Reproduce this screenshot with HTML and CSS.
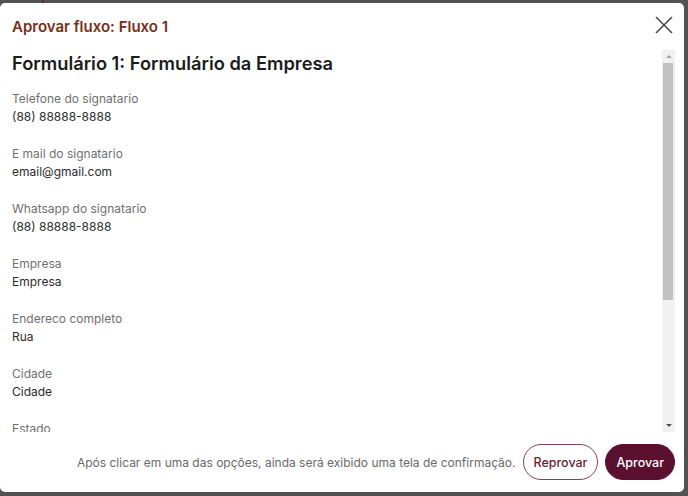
FILE: index.html
```html
<!DOCTYPE html>
<html lang="pt-BR">
<head>
<meta charset="utf-8">
<title>Aprovar fluxo</title>
<link rel="stylesheet" href="styles.css">
</head>
<body>
<div class="backdrop-mark"></div>
<div class="dialog">
  <div class="dialog-header">
    <h1 class="dialog-title">Aprovar fluxo: Fluxo 1</h1>
    <button class="close-btn" aria-label="Fechar">
      <svg width="20" height="20" viewBox="0 0 20 20"><path d="M2 2 L18 18 M18 2 L2 18" stroke="#4a4a4a" stroke-width="1.6" fill="none"/></svg>
    </button>
  </div>
  <div class="dialog-body">
    <div class="scroll-content">
      <h2 class="form-title">Formulário 1: Formulário da Empresa</h2>
      <div class="field"><div class="label">Telefone do signatario</div><div class="value">(88) 88888-8888</div></div>
      <div class="field"><div class="label">E mail do signatario</div><div class="value">email@gmail.com</div></div>
      <div class="field"><div class="label">Whatsapp do signatario</div><div class="value">(88) 88888-8888</div></div>
      <div class="field"><div class="label">Empresa</div><div class="value">Empresa</div></div>
      <div class="field"><div class="label">Endereco completo</div><div class="value">Rua</div></div>
      <div class="field"><div class="label">Cidade</div><div class="value">Cidade</div></div>
      <div class="field"><div class="label">Estado</div><div class="value">Estado</div></div>
      <div class="field"><div class="label">CEP</div><div class="value">00000-000</div></div>
    </div>
    <div class="scrollbar" aria-hidden="true">
      <div class="sb-btn"><span class="arrow-up"></span></div>
      <div class="sb-track"><div class="sb-thumb"></div></div>
      <div class="sb-btn"><span class="arrow-down"></span></div>
    </div>
  </div>
  <div class="dialog-footer">
    <span class="hint">Após clicar em uma das opções, ainda será exibido uma tela de confirmação.</span>
    <button class="btn btn-outline">Reprovar</button>
    <button class="btn btn-primary">Aprovar</button>
  </div>
</div>
</body>
</html>
```
FILE: styles.css
```css
* { box-sizing: border-box; }
html, body { margin: 0; padding: 0; }
body {
  width: 688px;
  height: 496px;
  background: #525252;
  font-family: "Inter", "DejaVu Sans", sans-serif;
  overflow: hidden;
  padding-top: 3px;
  position: relative;
}
.backdrop-mark {
  position: absolute;
  left: 42px;
  top: 0;
  width: 2px;
  height: 3px;
  background: #5a2a2a;
}
.dialog {
  width: 684px;
  height: 489px;
  background: #fff;
  border-radius: 5px;
  display: flex;
  flex-direction: column;
}
.dialog-header {
  display: flex;
  justify-content: space-between;
  align-items: flex-start;
  padding: 14px 10px 11px 12px;
  height: 45px;
}
.dialog-title {
  margin: 0;
  font-size: 15px;
  line-height: 20px;
  font-weight: 600;
  color: #7a2d14;
}
.close-btn {
  border: 0;
  background: none;
  padding: 0;
  margin-top: -2px;
  width: 20px;
  height: 20px;
  cursor: pointer;
}
.close-btn svg { display: block; }
.dialog-body {
  height: 384px;
  display: flex;
  margin-right: 9px;
}
.scroll-content {
  flex: 1;
  overflow: hidden;
  padding-left: 12px;
}
.scrollbar {
  width: 13px;
  margin-top: 2px;
  background: #f1f1f1;
  display: flex;
  flex-direction: column;
}
.sb-btn {
  height: 13px;
  display: flex;
  align-items: center;
  justify-content: center;
}
.arrow-up, .arrow-down {
  width: 0;
  height: 0;
  border-left: 3px solid transparent;
  border-right: 3px solid transparent;
}
.arrow-up { border-bottom: 3px solid #a3a3a3; }
.arrow-down { border-top: 3px solid #505050; }
.sb-track {
  flex: 1;
  padding: 0 2px 0 1px;
}
.sb-thumb {
  height: 237px;
  background: #c1c1c1;
}
.form-title {
  margin: 3px 0 15px;
  font-size: 18.3px;
  line-height: 24px;
  font-weight: 600;
  color: #1c1c1c;
}
.field { margin-bottom: 19px; }
.label, .value {
  font-size: 12px;
  line-height: 18px;
}
.label { color: #707070; }
.value { color: #2c2c2c; }
.dialog-footer {
  height: 60px;
  display: flex;
  align-items: center;
  justify-content: flex-end;
  gap: 7px;
  padding-right: 9px;
}
.hint {
  font-size: 12px;
  color: #6a6a6a;
}
.btn {
  height: 36px;
  border-radius: 18px;
  font-family: inherit;
  font-size: 12.5px;
  font-weight: 500;
  padding: 0 10px;
  cursor: pointer;
}
.btn-outline {
  background: #fff;
  border: 1px solid #8a4050;
  color: #6b1d33;
}
.btn-primary {
  background: #5c1030;
  border: 1px solid #5c1030;
  color: #fff;
}
```
